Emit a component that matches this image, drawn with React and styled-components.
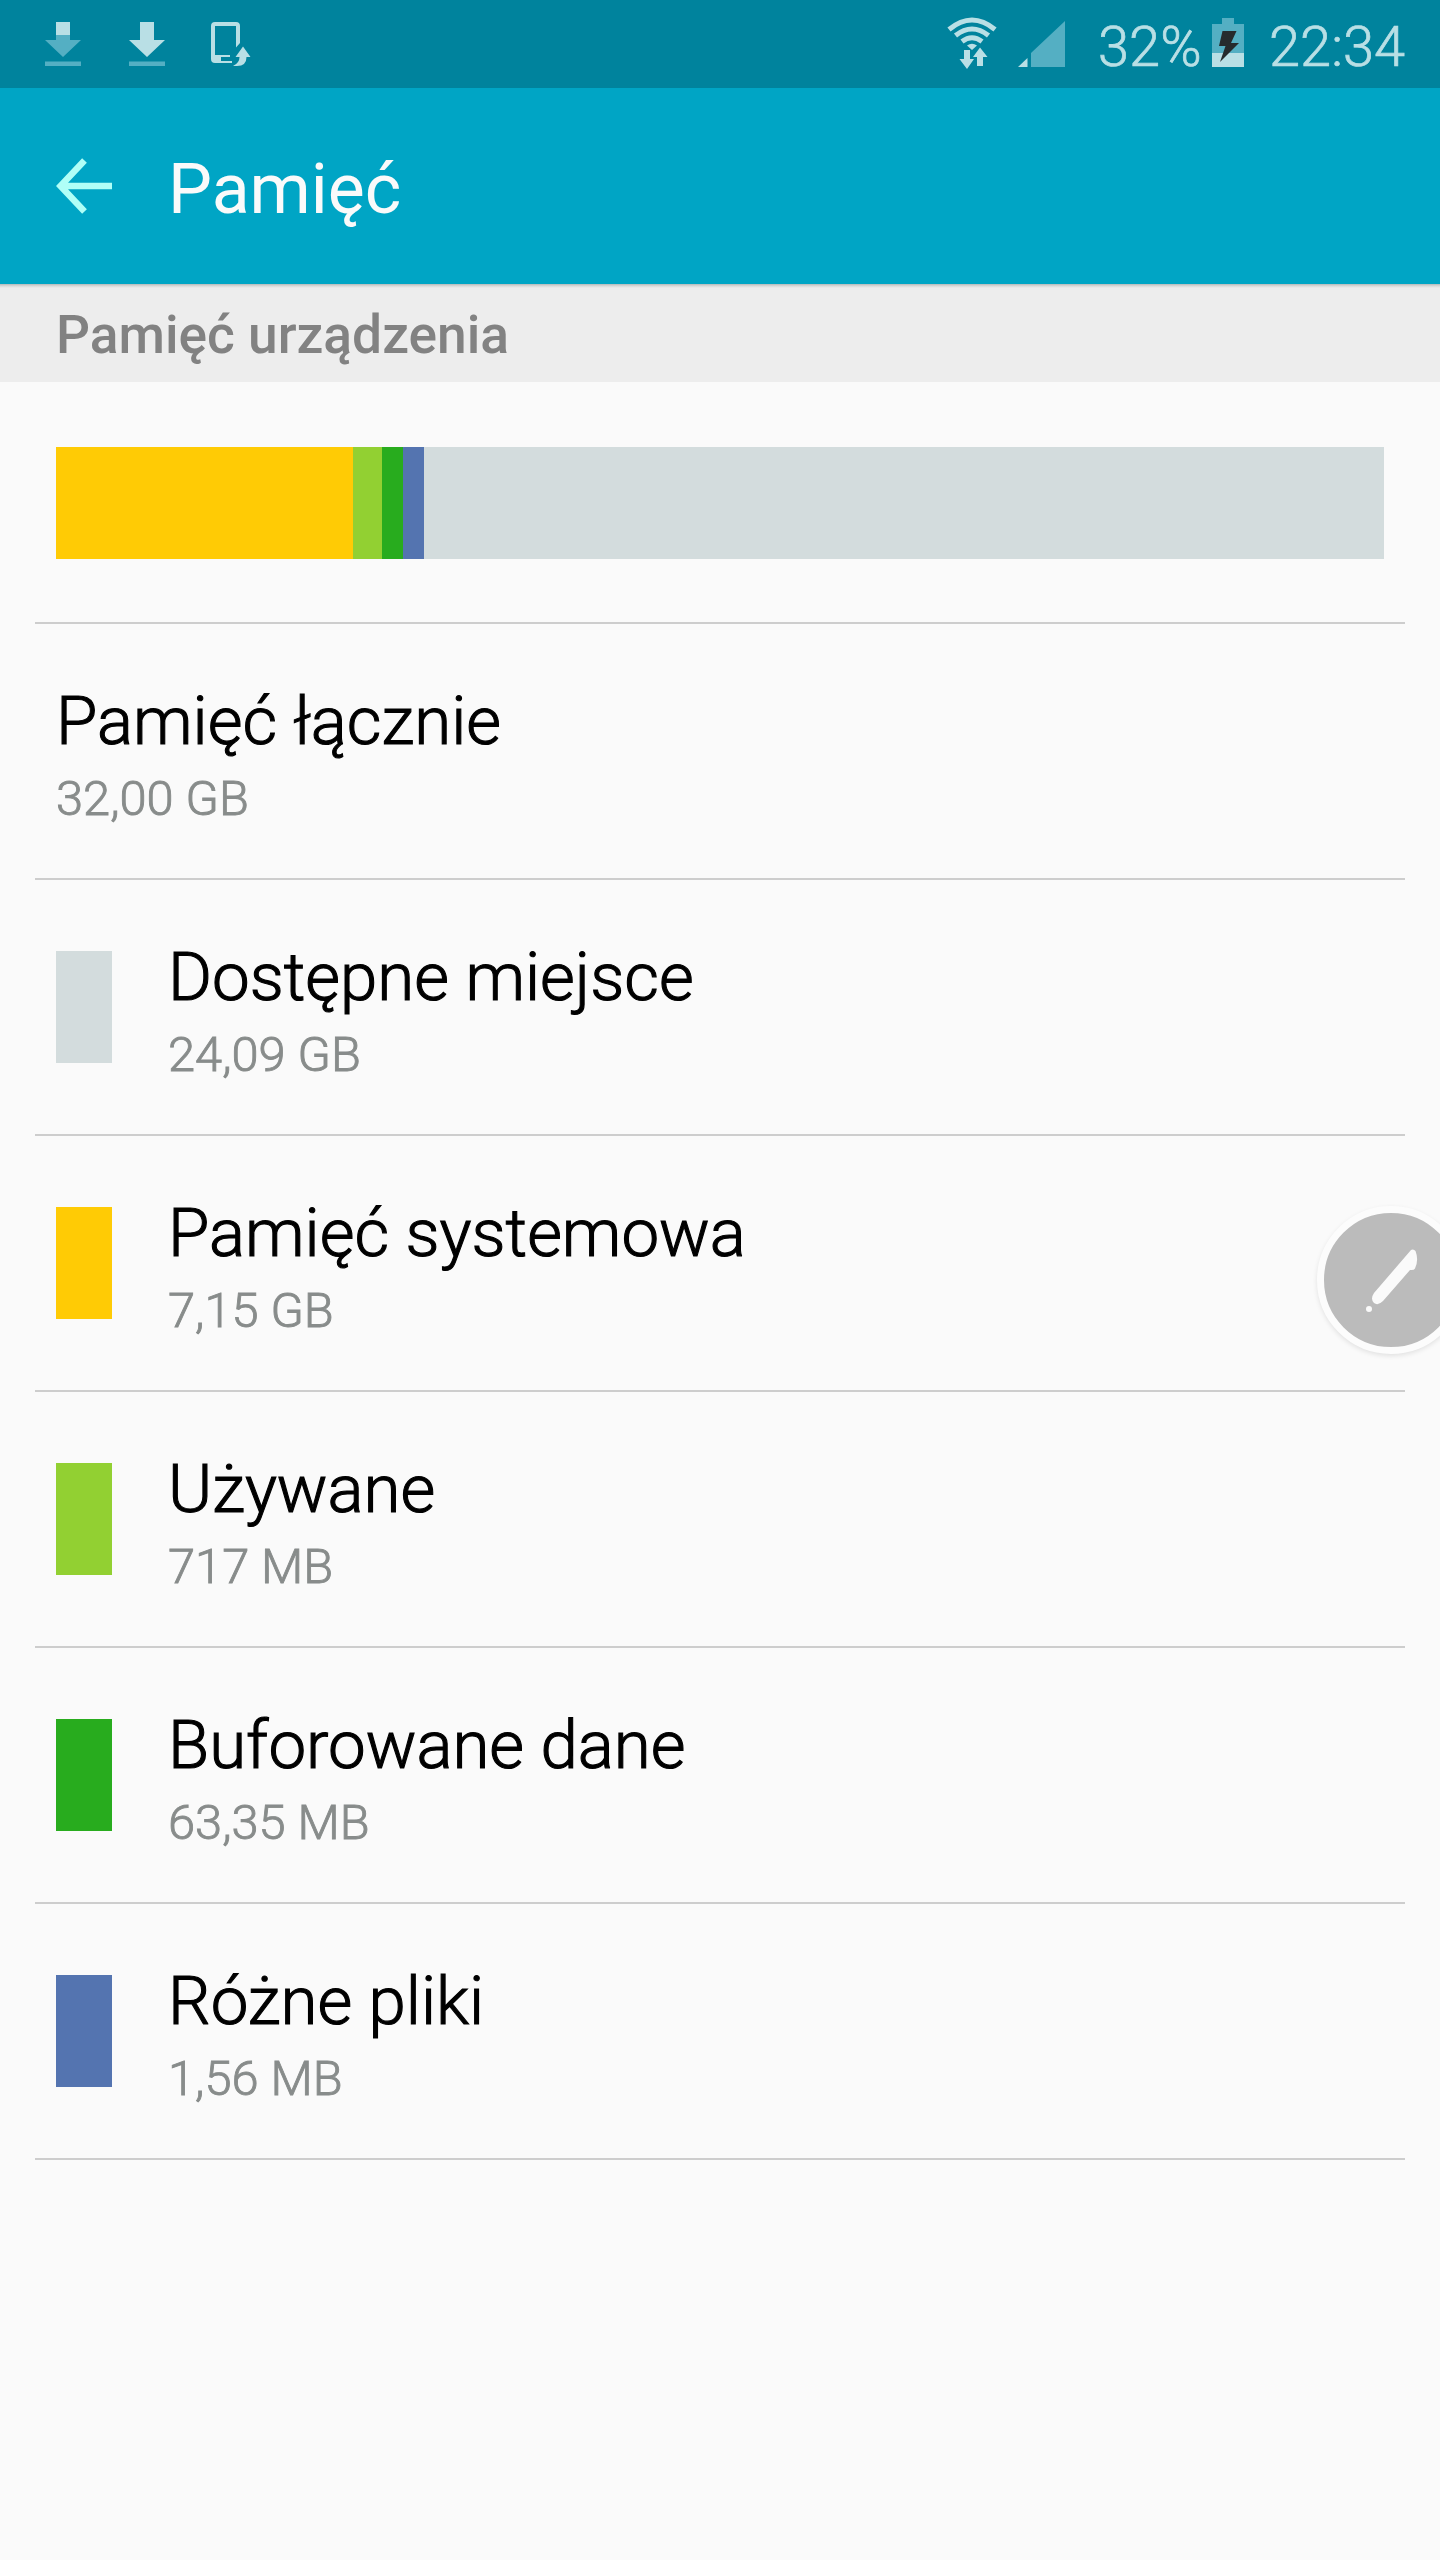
import React from 'react';
import styled, { createGlobalStyle } from 'styled-components';

const GlobalStyle = createGlobalStyle`
  html, body { margin: 0; padding: 0; background: #fafafa; }
  * { box-sizing: border-box; }
`;

const Screen = styled.div`
  position: relative;
  width: 1440px;
  height: 2560px;
  overflow: hidden;
  background: #fafafa;
  font-family: Roboto, 'Noto Sans', sans-serif;
  display: flex;
  flex-direction: column;
`;

const StatusBar = styled.header`
  height: 88px;
  flex: none;
  background: #00839d;
  color: #b9dfe5;
  display: flex;
  justify-content: space-between;
  padding: 0 34px 0 45px;
`;

const StatusGroup = styled.div`
  display: flex;
  align-items: flex-start;
`;

const StatusIcon = styled.svg`
  display: block;
  flex: none;
  margin-top: ${(p) => p.$top}px;
  margin-right: ${(p) => p.$gap || 0}px;
`;

const StatusText = styled.span`
  font-size: 56px;
  font-weight: 300;
  -webkit-text-stroke: 0.7px currentColor;
  line-height: 66px;
  margin-top: 14px;
  white-space: nowrap;
  width: ${(p) => p.$width}px;
`;

const AppBar = styled.div`
  height: 196px;
  flex: none;
  background: #00a5c5;
  display: flex;
  padding-left: 56px;
`;

const BackIcon = styled.svg`
  display: block;
  margin-top: 70px;
  margin-right: 56px;
`;

const Title = styled.h1`
  margin: 60px 0 0;
  font-size: 69.8px;
  font-weight: 400;
  line-height: 82px;
  color: #fafafa;
`;

const SectionHeader = styled.h2`
  margin: 0;
  height: 98px;
  flex: none;
  padding: 20px 56px 0;
  background: linear-gradient(#b4b9ba 0, #d8dada 2px, #ededed 4px);
  font-size: 53.3px;
  font-weight: 500;
  line-height: 62px;
  color: #828282;
`;

const UsageBlock = styled.section`
  height: 242px;
  flex: none;
  margin: 0 35px;
  padding: 65px 21px 0;
  border-bottom: 2px solid #cdcdcd;
`;

const UsageBar = styled.div`
  display: flex;
  height: 112px;
  background: #d3dcdd;
`;

const Segment = styled.div`
  width: ${(p) => p.$width}px;
  background: ${(p) => p.$color};
`;

const List = styled.ul`
  list-style: none;
  margin: 0 35px;
  padding: 0;
`;

const Row = styled.li`
  height: 256px;
  display: flex;
  padding: 0 21px;
  border-bottom: 2px solid #cdcdcd;
`;

const Swatch = styled.span`
  width: 56px;
  height: 112px;
  margin: 71px 56px 0 0;
  background: ${(p) => p.$color};
`;

const RowText = styled.div`
  display: flex;
  flex-direction: column;
  padding-top: 57px;
`;

const RowTitle = styled.span`
  font-size: 67.2px;
  font-weight: 300;
  -webkit-text-stroke: 1.1px currentColor;
  line-height: 80px;
  color: #000;
  white-space: nowrap;
`;

const RowValue = styled.span`
  font-size: 48.8px;
  font-weight: 300;
  -webkit-text-stroke: 0.9px currentColor;
  line-height: 58px;
  margin-top: 9px;
  color: #888c8b;
  white-space: nowrap;
`;

const PenButton = styled.button`
  position: absolute;
  left: 1317px;
  top: 1206px;
  width: 148px;
  height: 148px;
  padding: 0;
  border: 7px solid #fcfcfc;
  border-radius: 50%;
  background: #bbb;
  box-shadow: 0 2px 5px rgba(0, 0, 0, 0.1);
`;

const PenIcon = styled.svg`
  display: block;
`;

const segments = [
  { color: '#ffcb05', width: 297 },
  { color: '#92d032', width: 29 },
  { color: '#28ac1e', width: 21 },
  { color: '#5474b0', width: 21 },
];

const rows = [
  { title: 'Pamięć łącznie', value: '32,00 GB' },
  { title: 'Dostępne miejsce', value: '24,09 GB', color: '#d3dcdd' },
  { title: 'Pamięć systemowa', value: '7,15 GB', color: '#ffcb05' },
  { title: 'Używane', value: '717 MB', color: '#92d032' },
  { title: 'Buforowane dane', value: '63,35 MB', color: '#28ac1e' },
  { title: 'Różne pliki', value: '1,56 MB', color: '#5474b0' },
];

function DownloadIcon({ partial, gap }) {
  return (
    <StatusIcon $top={22} $gap={gap} width="36" height="44" viewBox="0 0 36 44">
      <path d="M11 0h14v18h11L18 35 0 18h11z" fill={partial ? '#54afc3' : '#b9dfe5'} />
      {partial && <path d="M11 0h14v13H11z" fill="#b9dfe5" />}
      <path d="M0 39.5h36V44H0z" fill="#54afc3" />
    </StatusIcon>
  );
}

function DeviceUpdateIcon() {
  return (
    <StatusIcon $top={22} width="40" height="44" viewBox="0 0 40 44">
      <path
        fill="#b9dfe5"
        fillRule="evenodd"
        d="M4 0H25Q29 0 29 4V21L25 25.500V4H4V33H19V35H10V39H21V41H4Q0 41 0 37V4Q0 0 4 0Z"
      />
      <path fill="#b9dfe5" d="M32 24.500 39.500 35H35.500Q35.500 44 26 44H22Q28.500 41 28.500 35H24.500Z" />
    </StatusIcon>
  );
}

function WifiIcon() {
  return (
    <StatusIcon $top={17} $gap={21} width="50" height="53" viewBox="0 0 50 53">
      <g fill="none" stroke="#b9dfe5" strokeWidth="5">
        <path d="M2 12.500Q25-6.500 48 12.500" />
        <path d="M8.500 18.500Q25 5.500 41.500 18.500" />
        <path d="M15 24.500Q25 17 35 24.500" />
      </g>
      <path fill="#b9dfe5" d="M20 28.500Q25 25 30 28.500L25 33Z" />
      <path fill="#b9dfe5" d="M17 33h6v9h4L20 52l-7.500-10H17z" />
      <path fill="#b9dfe5" d="M33 30.500 40.500 40H36v9h-6V40h-4z" />
    </StatusIcon>
  );
}

function SignalIcon() {
  return (
    <StatusIcon $top={21} $gap={33} width="47" height="46" viewBox="0 0 47 46">
      <path fill="#b9dfe5" d="M9.500 37v9H0z" />
      <path fill="#54afc3" d="M13 32 47 0v46H13z" />
    </StatusIcon>
  );
}

function BatteryIcon() {
  return (
    <StatusIcon $top={18} $gap={25} width="32" height="49" viewBox="0 0 32 49">
      <path fill="#54afc3" d="M10 0h12v6h10v43H0V6h10z" />
      <path fill="#b9dfe5" d="M0 35h32v14H0z" />
      <path fill="#262b2d" d="M10.500 13h14L19 25h8L8 44l5.500-16H7z" />
    </StatusIcon>
  );
}

export default function App() {
  return (
    <>
      <GlobalStyle />
      <Screen>
        <StatusBar>
          <StatusGroup>
            <DownloadIcon partial gap={48} />
            <DownloadIcon gap={46} />
            <DeviceUpdateIcon />
          </StatusGroup>
          <StatusGroup>
            <WifiIcon />
            <SignalIcon />
            <StatusText $width={114}>32%</StatusText>
            <BatteryIcon />
            <StatusText $width={137}>22:34</StatusText>
          </StatusGroup>
        </StatusBar>

        <AppBar>
          <BackIcon width="56" height="56" viewBox="0 0 56 56">
            <path
              d="M28.500 2.500 4.500 28 28.500 53.500M4.500 28H56"
              fill="none"
              stroke="#b0fff7"
              strokeWidth="6.500"
            />
          </BackIcon>
          <Title>Pamięć</Title>
        </AppBar>

        <SectionHeader>Pamięć urządzenia</SectionHeader>

        <UsageBlock>
          <UsageBar>
            {segments.map((s) => (
              <Segment key={s.color} $color={s.color} $width={s.width} />
            ))}
          </UsageBar>
        </UsageBlock>

        <List>
          {rows.map((r) => (
            <Row key={r.title}>
              {r.color && <Swatch $color={r.color} />}
              <RowText>
                <RowTitle>{r.title}</RowTitle>
                <RowValue>{r.value}</RowValue>
              </RowText>
            </Row>
          ))}
        </List>

        <PenButton aria-label="Pen">
          <PenIcon width="134" height="134" viewBox="1324 1213 134 134">
            <path
              fill="#fafafa"
              d="M1411 1250Q1413.500 1248.500 1415.500 1251Q1419 1260 1415 1268.500Q1414 1270.500 1410 1270L1383 1301Q1378 1306 1374 1303Q1370 1299 1374 1293Z"
            />
            <circle cx="1369" cy="1309" r="3" fill="#fafafa" />
          </PenIcon>
        </PenButton>
      </Screen>
    </>
  );
}
